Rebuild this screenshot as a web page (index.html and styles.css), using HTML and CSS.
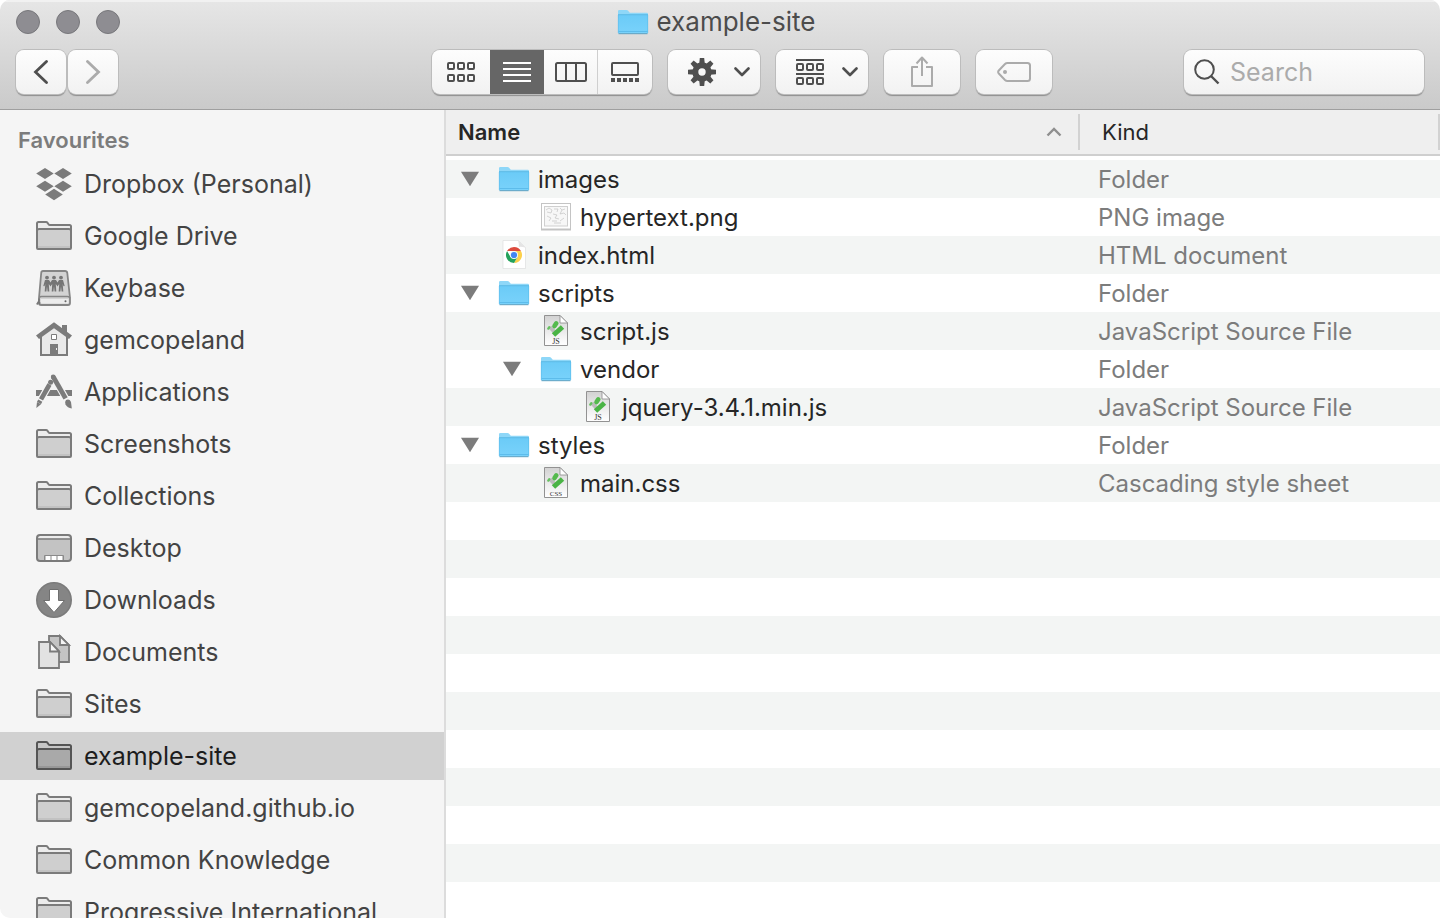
FILE: index.html
```html
<!DOCTYPE html>
<html lang="en-GB">
<head>
<meta charset="utf-8">
<meta name="viewport" content="width=device-width, initial-scale=1">
<title>example-site</title>
<link rel="stylesheet" href="styles.css">
</head>
<body>
<svg class="sprite" aria-hidden="true">
  <defs>
    <linearGradient id="blue" x1="0" y1="0" x2="0" y2="1"><stop offset="0" stop-color="#6bcbf7"/><stop offset="1" stop-color="#79d2fb"/></linearGradient>
    <linearGradient id="paper" x1="0" y1="0" x2="0" y2="1"><stop offset="0" stop-color="#d2d2d2"/><stop offset=".7" stop-color="#f3f3f3"/><stop offset="1" stop-color="#fff"/></linearGradient>
  </defs>
  <symbol id="folder-blue" viewBox="0 0 32 32">
    <path d="M1 5.200Q1 4 2.200 4H9.500Q10.500 4 11.300 5L12.800 6.700H29.800Q31 6.700 31 8V27H1Z" fill="#8ed7f8"/>
    <path d="M1 9H31V26.500Q31 27.500 30 27.500H2Q1 27.500 1 26.500Z" fill="url(#blue)"/>
    <path d="M1 8.700H31" stroke="#5ab9e6"/>
    <path d="M1.500 25.500H30.500" stroke="#5dbceb"/>
    <path d="M1.500 27.700H30.500" stroke="#5a9fc0"/>
    <path d="M1.300 9V27M30.700 9V27" stroke="#5bbbe9" stroke-width=".6"/>
  </symbol>
  <symbol id="folder" viewBox="0 0 36 36">
    <path d="M1 31V5.500Q1 4 2.500 4H10Q11 4 11.700 5L12.500 6.200Q13 7 14 7H33.500Q35 7 35 8.500V31Z" fill="var(--light)"/>
    <path d="M1 11H35V31H1Z" fill="var(--fill)"/>
    <path d="M2 29H34" stroke="var(--shade)" stroke-width="2"/>
    <path d="M1 12.500Q1.500 11 3 11H33Q34.500 11 35 12.500" fill="none" stroke="var(--line)" stroke-width="2"/>
    <path d="M1 30V5.500Q1 4 2.500 4H10Q11 4 11.700 5L12.500 6.200Q13 7 14 7H33.500Q35 7 35 8.500V30Q35 31 34 31H2Q1 31 1 30Z" fill="none" stroke="var(--line)" stroke-width="2"/>
  </symbol>
  <symbol id="dropbox" viewBox="0 0 36 36">
    <path d="M9 2L17.700 7.500 9 13 .2 7.500ZM27 2L35.800 7.500 27 13 18.300 7.500ZM9 14.800L17.700 20.300 9 25.800 .2 20.300ZM27 14.800L35.800 20.300 27 25.800 18.300 20.300ZM18 22.800L26.800 28.500 18 34.300 9.200 28.500Z" fill="#7b7b7b"/>
  </symbol>
  <symbol id="keybase" viewBox="0 0 36 36">
    <path d="M7 1H29Q31 1 31.300 3L34 28V33Q34 35 32 35H5Q3 35 3 33V28L5.200 3Q5.400 1 7 1Z" fill="#d3d3d3" stroke="#858585" stroke-width="1.800"/>
    <path d="M3.500 27.500Q4 26.500 5.500 26.500H31.500Q33.500 26.500 33.800 28" fill="none" stroke="#858585" stroke-width="1.600"/>
    <path d="M4.800 29H32.500V32.500Q32.500 33.600 31.500 33.600H6Q4.800 33.600 4.800 32.500Z" fill="#ececec"/>
    <circle cx="29.500" cy="31.300" r="1" fill="#666"/>
    <path d="M3 28.500V31L.8 34.500M3.500 32V34.500" stroke="#777" stroke-width="1.600" fill="none"/>
    <g fill="#757575">
      <circle cx="11" cy="7.600" r="1.900"/><circle cx="18" cy="7.600" r="1.900"/><circle cx="25" cy="7.600" r="1.900"/>
      <path d="M9 10H13L14.500 12.500 16 10H20L21.500 12.500 23 10H27L28.700 16 27.500 16.300 26.700 14 27.300 21.500H25.600L25 16.500 24.400 21.500H22.700L23.200 14 21.500 16.500 19.800 14 20.300 21.500H18.600L18 16.500 17.400 21.500H15.700L16.200 14 14.500 16.500 12.800 14 13.300 21.500H11.600L11 16.500 10.400 21.500H8.700L9.300 14 8.500 16.300 7.300 16Z"/>
    </g>
  </symbol>
  <symbol id="home" viewBox="0 0 36 36">
    <path d="M5 13L18 4 31 13V33H5Z" fill="#e9e9e9" stroke="#7b7b7b" stroke-width="2"/>
    <path d="M26 3H31V12L26 8Z" fill="#7b7b7b"/>
    <path d="M18 .3L36 13.500 33 17 18 6.200 3 17 0 13.500Z" fill="#7b7b7b"/>
    <path d="M15.500 12.500H20.500V17.500H15.500Z" fill="#fff" stroke="#7b7b7b"/>
    <path d="M14 22H22V33H14Z" fill="#7b7b7b"/><path d="M20.500 26V28" stroke="#eee"/>
  </symbol>
  <symbol id="apps" viewBox="0 0 36 36">
    <path d="M0 16H36V22H0Z" fill="#7b7b7b"/>
    <path d="M15.500 6.500L2.500 30" stroke="#f5f5f5" stroke-width="7"/>
    <path d="M17.500 3L34 32" stroke="#f5f5f5" stroke-width="7"/>
    <path d="M13.500 10.500L5 25.400M4.300 26.700L3 29" stroke="#7b7b7b" stroke-width="4.600"/>
    <circle cx="14.600" cy="8.300" r="2.500" fill="#7b7b7b"/>
    <path d="M1 28L5 30.300 .3 34Z" fill="#7b7b7b"/>
    <path d="M17.300 3L29.600 24.400" stroke="#7b7b7b" stroke-width="4.800"/>
    <circle cx="17.200" cy="3" r="2.400" fill="#7b7b7b"/>
    <path d="M30 26Q33.500 24.500 35 28L35.800 34.500Q31.500 34 29.500 30.500Q28.500 27.500 30 26Z" fill="#7b7b7b"/>
  </symbol>
  <symbol id="desktop" viewBox="0 0 36 36">
    <rect x="1" y="5" width="34" height="26" rx="3" fill="#c3c3c3"/>
    <path d="M2 8Q2 6 4 6H32Q34 6 34 8V8.500H2Z" fill="#ececec"/>
    <path d="M1 9H35" stroke="#7b7b7b" stroke-width="1.600"/>
    <path d="M8.500 25.500H27.500V31H8.500Z" fill="none" stroke="#8a8a8a"/>
    <path d="M10 26H14V30H10ZM16 26H20V30H16ZM22 26H26V30H22Z" fill="#fff"/>
    <rect x="1" y="5" width="34" height="26" rx="3" fill="none" stroke="#7b7b7b" stroke-width="2"/>
  </symbol>
  <symbol id="downloads" viewBox="0 0 36 36">
    <circle cx="18" cy="18" r="17.200" fill="#858585" stroke="#7b7b7b" stroke-width="1.600"/>
    <path d="M13.500 7.500H22.500V18.500H28.500L18 30.500 7.500 18.500H13.500Z" fill="#fff" stroke="#6f6f6f" stroke-linejoin="round"/>
  </symbol>
  <symbol id="documents" viewBox="0 0 36 36">
    <g stroke="#7b7b7b" stroke-width="1.800">
      <path d="M13 2H24L33 11V28H13Z" fill="#c4c4c4"/><path d="M24 2V11H33Z" fill="#f5f5f5"/>
      <path d="M3 8H14L23 17V34H3Z" fill="#e2e2e2"/><path d="M14 8V17.500H23Z" fill="#f8f8f8"/>
    </g>
  </symbol>
  <symbol id="picture" viewBox="0 0 32 32">
    <rect x="1" y="3.500" width="30" height="26" fill="#888" opacity=".5"/>
    <rect x="1.500" y="2.500" width="29" height="25.500" fill="#fff" stroke="#c4c4c4"/>
    <rect x="4.500" y="5.500" width="23" height="19.500" fill="#f7f7f7" stroke="#cfcfcf"/>
    <path d="M6 9L9 7 12 9 11 12 7 11M14 8H18L17 11M20 7L22 9 25 8M22 9L20 13 24 12 26 14M7 15L11 17 9 20M13 13L17 14 15 17 19 18M12 20H17M14 22H21M20 20L24 17" fill="none" stroke="#bbb" stroke-width=".6"/>
  </symbol>
  <symbol id="chrome-doc" viewBox="0 0 32 32">
    <path d="M5 1.500H20.500L27.500 8.500V29.500H5Z" fill="#fff" stroke="#dedede" stroke-width=".7"/>
    <path d="M20 1.500Q21.500 6 20.800 8 24 7.500 27.500 8.800Z" fill="#e4e4e4"/>
    <path d="M9.070 12A8 8 0 0 1 22.930 12H16Z" fill="#dd4b3e"/>
    <path d="M22.930 12A8 8 0 0 1 16 24L19.500 18 16 12Z" fill="#fcd04b"/>
    <path d="M16 24A8 8 0 0 1 9.070 12L12.500 18 19.500 18Z" fill="#24a25b"/>
    <circle cx="16" cy="16" r="4" fill="#f4f6f8"/><circle cx="16" cy="16" r="3.100" fill="#4285f4"/>
  </symbol>
  <symbol id="code-doc" viewBox="0 0 32 32">
    <path d="M4.500 .5H20L27.500 8V30.500H4.500Z" fill="url(#paper)" stroke="#929292"/>
    <path d="M20 .5V8H27.500Z" fill="#fff" stroke="#8c8c8c" stroke-width=".8"/>
    <path d="M10 12L14.500 17" stroke="#bdbdbd" stroke-width="4"/>
    <path d="M13.500 20L22.500 12" stroke="#4ab445" stroke-width="5"/>
    <path d="M14.500 11L16.300 8.300" stroke="#55ba4e" stroke-width="4.600" stroke-linecap="round"/>
    <path d="M8.300 13.600L9.300 12.200" stroke="#66c160" stroke-width="2.400" stroke-linecap="round"/>
  </symbol>
  <symbol id="icons-view" viewBox="0 0 28 20"><g fill="none" stroke="currentColor" stroke-width="2"><rect x="1" y="1" width="6" height="6" rx="1"/><rect x="11" y="1" width="6" height="6" rx="1"/><rect x="21" y="1" width="6" height="6" rx="1"/><rect x="1" y="13" width="6" height="6" rx="1"/><rect x="11" y="13" width="6" height="6" rx="1"/><rect x="21" y="13" width="6" height="6" rx="1"/></g></symbol>
  <symbol id="chevron" viewBox="0 0 16 10"><path d="M1.500 1.500L8 8 14.500 1.500" fill="none" stroke="currentColor" stroke-width="2.600" stroke-linecap="round" stroke-linejoin="round"/></symbol>
</svg>

<div class="window">
  <header class="titlebar">
    <div class="title-row">
      <div class="lights">
        <button class="light" aria-label="Close"></button>
        <button class="light" aria-label="Minimise"></button>
        <button class="light" aria-label="Zoom"></button>
      </div>
      <h1 class="title"><svg class="icon-32" aria-hidden="true"><use href="#folder-blue"/></svg>example-site</h1>
    </div>
    <div class="toolbar">
      <nav class="history" aria-label="History">
        <button class="tool nav-button" aria-label="Back"><svg width="16" height="24" viewBox="0 0 16 24"><path d="M13.500 1.500L2.500 12 13.500 22.500" fill="none" stroke="currentColor" stroke-width="2.800" stroke-linecap="round"/></svg></button>
        <button class="tool nav-button" aria-label="Forward" disabled><svg width="16" height="24" viewBox="0 0 16 24"><path d="M2.500 1.500L13.500 12 2.500 22.500" fill="none" stroke="currentColor" stroke-width="2.800" stroke-linecap="round"/></svg></button>
      </nav>
      <div class="views" role="group" aria-label="View">
        <button class="view" aria-label="Icons"><svg width="28" height="20"><use href="#icons-view"/></svg></button>
        <button class="view selected" aria-label="List" aria-pressed="true"><svg width="28" height="20" viewBox="0 0 28 20"><path d="M0 1H28M0 7H28M0 13H28M0 19H28" stroke="currentColor" stroke-width="2"/></svg></button>
        <button class="view divided" aria-label="Columns"><svg width="32" height="20" viewBox="0 0 32 20"><path d="M11 1V19M21 1V19" stroke="currentColor" stroke-width="2"/><rect x="1" y="1" width="30" height="18" rx="1.500" fill="none" stroke="currentColor" stroke-width="2"/></svg></button>
        <button class="view" aria-label="Gallery"><svg width="28" height="20" viewBox="0 0 28 20"><rect x="1" y="1" width="26" height="12" rx="1" fill="none" stroke="currentColor" stroke-width="2"/><path d="M0 16H4V20H0ZM6 16H10V20H6ZM12 16H16V20H12ZM18 16H22V20H18ZM24 16H28V20H24Z" fill="currentColor"/></svg></button>
      </div>
      <button class="tool menu-button" aria-label="Action"><svg width="28" height="28" viewBox="-14 -14 28 28"><g fill="currentColor"><path id="tooth" d="M-2.800 -8L-2.200 -14H2.200L2.800 -8Z"/><use href="#tooth" transform="rotate(45)"/><use href="#tooth" transform="rotate(90)"/><use href="#tooth" transform="rotate(135)"/><use href="#tooth" transform="rotate(180)"/><use href="#tooth" transform="rotate(225)"/><use href="#tooth" transform="rotate(270)"/><use href="#tooth" transform="rotate(315)"/></g><circle r="6.700" fill="none" stroke="currentColor" stroke-width="6"/></svg><svg width="16" height="10"><use href="#chevron"/></svg></button>
      <button class="tool menu-button" aria-label="Group"><svg width="28" height="26" viewBox="0 0 28 26"><path d="M0 1H28M0 15H28" stroke="currentColor" stroke-width="2"/><g fill="none" stroke="currentColor" stroke-width="2"><rect x="1" y="5" width="6" height="6" rx="1"/><rect x="11" y="5" width="6" height="6" rx="1"/><rect x="21" y="5" width="6" height="6" rx="1"/><rect x="1" y="19" width="6" height="6" rx="1"/><rect x="11" y="19" width="6" height="6" rx="1"/><rect x="21" y="19" width="6" height="6" rx="1"/></g></svg><svg width="16" height="10"><use href="#chevron"/></svg></button>
      <button class="tool wide" aria-label="Share" disabled><svg width="22" height="32" viewBox="0 0 22 32"><path d="M7 11H1V30H21V11H15M11 20V2M5.500 7.500L11 1.500 16.500 7.500" fill="none" stroke="currentColor" stroke-width="2" stroke-linejoin="round"/></svg></button>
      <button class="tool wide" aria-label="Tags" disabled><svg width="34" height="20" viewBox="0 0 34 20"><path d="M10.500 1H30.500Q33 1 33 3.500V16.500Q33 19 30.500 19H10.500Q9 19 8 18L1.800 11.500Q.5 10 1.800 8.500L8 2Q9 1 10.500 1Z" fill="none" stroke="currentColor" stroke-width="2"/><circle cx="8" cy="10" r="2" fill="currentColor"/></svg></button>
      <label class="search">
        <svg width="26" height="26" viewBox="0 0 26 26" aria-hidden="true"><circle cx="10.500" cy="10.500" r="9.300" fill="none" stroke="#4f4f4f" stroke-width="2"/><path d="M17 17L24.500 24.500" stroke="#4f4f4f" stroke-width="2.400"/></svg>
        <input type="search" placeholder="Search" aria-label="Search">
      </label>
    </div>
  </header>

  <div class="content">
    <aside class="sidebar">
      <h2 class="sidebar-heading">Favourites</h2>
      <ul class="places">
        <li><a class="place" href="#"><svg class="icon-36"><use href="#dropbox"/></svg>Dropbox (Personal)</a></li>
        <li><a class="place" href="#"><svg class="icon-36"><use href="#folder"/></svg>Google Drive</a></li>
        <li><a class="place" href="#"><svg class="icon-36"><use href="#keybase"/></svg>Keybase</a></li>
        <li><a class="place" href="#"><svg class="icon-36"><use href="#home"/></svg>gemcopeland</a></li>
        <li><a class="place" href="#"><svg class="icon-36"><use href="#apps"/></svg>Applications</a></li>
        <li><a class="place" href="#"><svg class="icon-36"><use href="#folder"/></svg>Screenshots</a></li>
        <li><a class="place" href="#"><svg class="icon-36"><use href="#folder"/></svg>Collections</a></li>
        <li><a class="place" href="#"><svg class="icon-36"><use href="#desktop"/></svg>Desktop</a></li>
        <li><a class="place" href="#"><svg class="icon-36"><use href="#downloads"/></svg>Downloads</a></li>
        <li><a class="place" href="#"><svg class="icon-36"><use href="#documents"/></svg>Documents</a></li>
        <li><a class="place" href="#"><svg class="icon-36"><use href="#folder"/></svg>Sites</a></li>
        <li><a class="place current" href="#" aria-current="page"><svg class="icon-36"><use href="#folder"/></svg>example-site</a></li>
        <li><a class="place" href="#"><svg class="icon-36"><use href="#folder"/></svg>gemcopeland.github.io</a></li>
        <li><a class="place" href="#"><svg class="icon-36"><use href="#folder"/></svg>Common Knowledge</a></li>
        <li><a class="place" href="#"><svg class="icon-36"><use href="#folder"/></svg>Progressive International</a></li>
      </ul>
    </aside>

    <main class="files">
      <table class="file-table">
        <colgroup><col class="col-name"><col></colgroup>
        <thead>
          <tr>
            <th scope="col" aria-sort="ascending"><div class="head sorted">Name<svg width="16" height="10" viewBox="0 0 16 10" aria-hidden="true"><path d="M1.500 8.500L8 2 14.500 8.500" fill="none" stroke="#8f8f8f" stroke-width="2.400"/></svg></div></th>
            <th scope="col"><div class="head kind-head">Kind</div></th>
          </tr>
        </thead>
        <tbody>
          <tr><td><div class="file"><button class="toggle" aria-label="Collapse images"></button><svg class="icon-32"><use href="#folder-blue"/></svg>images</div></td><td class="kind">Folder</td></tr>
          <tr><td><div class="file leaf level-1"><svg class="icon-32"><use href="#picture"/></svg>hypertext.png</div></td><td class="kind">PNG image</td></tr>
          <tr><td><div class="file leaf"><svg class="icon-32"><use href="#chrome-doc"/></svg>index.html</div></td><td class="kind">HTML document</td></tr>
          <tr><td><div class="file"><button class="toggle" aria-label="Collapse scripts"></button><svg class="icon-32"><use href="#folder-blue"/></svg>scripts</div></td><td class="kind">Folder</td></tr>
          <tr><td><div class="file leaf level-1"><svg class="icon-32" viewBox="0 0 32 32"><use href="#code-doc"/><text class="badge" x="16" y="29">JS</text></svg>script.js</div></td><td class="kind">JavaScript Source File</td></tr>
          <tr><td><div class="file level-1"><button class="toggle" aria-label="Collapse vendor"></button><svg class="icon-32"><use href="#folder-blue"/></svg>vendor</div></td><td class="kind">Folder</td></tr>
          <tr><td><div class="file leaf level-2"><svg class="icon-32" viewBox="0 0 32 32"><use href="#code-doc"/><text class="badge" x="16" y="29">JS</text></svg>jquery-3.4.1.min.js</div></td><td class="kind">JavaScript Source File</td></tr>
          <tr><td><div class="file"><button class="toggle" aria-label="Collapse styles"></button><svg class="icon-32"><use href="#folder-blue"/></svg>styles</div></td><td class="kind">Folder</td></tr>
          <tr><td><div class="file leaf level-1"><svg class="icon-32" viewBox="0 0 32 32"><use href="#code-doc"/><text class="badge long" x="16" y="29">CSS</text></svg>main.css</div></td><td class="kind">Cascading style sheet</td></tr>
        </tbody>
      </table>
    </main>
  </div>
</div>
</body>
</html>
```

FILE: styles.css
```css
* { box-sizing: border-box; }

body {
  margin: 0;
  background: #fff;
  font-family: Inter, "Liberation Sans", sans-serif;
  color: #262626;
}

button { padding: 0; border: 0; font: inherit; }
svg { flex: none; display: block; }
.sprite { position: absolute; width: 0; height: 0; }
.icon-32 { width: 32px; height: 32px; }
.icon-36 { width: 36px; height: 36px; }

.window {
  display: flex;
  flex-direction: column;
  height: 100vh;
  overflow: hidden;
  border-radius: 10px;
}

/* Title bar and toolbar */
.titlebar {
  flex: none;
  padding: 3px 16px 15px;
  border-bottom: 1px solid #9f9f9f;
  background: linear-gradient(#e6e6e6, #cacaca);
  box-shadow: inset 0 2px #f1f1f1;
}

.title-row {
  display: grid;
  grid-template-columns: 1fr auto 1fr;
  align-items: center;
  height: 38px;
}

.lights { display: flex; gap: 16px; }

.light {
  width: 24px;
  height: 24px;
  border: 1px solid #77777b;
  border-radius: 50%;
  background: #8e8d92;
}

.title {
  display: flex;
  align-items: center;
  gap: 8px;
  margin: 0 8px 0 0;
  font-size: 26px;
  font-weight: 400;
  line-height: 36px;
  color: #4c4c4c;
}

.toolbar { display: flex; align-items: center; gap: 16px; margin-top: 9px; }
.history { display: flex; flex: 0 0 400px; gap: 2px; }

.tool, .views, .search {
  flex: none;
  height: 44px;
  border-radius: 8px;
  background: linear-gradient(#fdfdfd, #f2f2f2);
  box-shadow: 0 0 0 1px #bcbcbc, 0 2px 1px #8e8e8e;
  color: #4f4f4f;
}

.tool { display: flex; align-items: center; justify-content: center; }
.tool:disabled { color: #ababab; }
.nav-button { width: 50px; }
.wide { width: 76px; }
.menu-button { width: 92px; padding: 0 10px 0 20px; justify-content: space-between; }

.views { display: flex; overflow: hidden; }

.view {
  display: flex;
  flex: none;
  width: 54px;
  align-items: center;
  justify-content: center;
  background: none;
  color: inherit;
}

.view:first-child { width: 58px; }
.view.selected { background: #666; color: #fff; }
.view.divided { border-right: 1px solid #cfcfcf; }

.search {
  display: flex;
  width: 240px;
  align-items: center;
  gap: 10px;
  margin-left: auto;
  padding: 0 10px;
}

.search input {
  flex: 1;
  width: 100%;
  min-width: 0;
  padding: 0;
  border: 0;
  outline: 0;
  background: none;
  font: inherit;
  font-size: 25px;
}

.search input::placeholder { color: #ababab; opacity: 1; }

/* Gaps between buttons and groups */
.menu-button + .menu-button { margin: 0; }

/* Sidebar */
.content { display: flex; flex: 1; min-height: 0; }

.sidebar {
  flex: 0 0 446px;
  overflow: hidden;
  border-right: 2px solid #dcdcdc;
  background: #f5f5f5;
}

.sidebar-heading {
  margin: 0;
  padding: 10px 18px 0;
  font-size: 22px;
  font-weight: 600;
  line-height: 40px;
  color: #7c7c7c;
}

.places {
  display: flex;
  flex-direction: column;
  gap: 4px;
  margin: 0;
  padding: 0;
  list-style: none;
}

.place {
  --line: #7b7b7b;
  --fill: #cfcfcf;
  --light: #ececec;
  --shade: #c2c2c2;
  display: flex;
  align-items: center;
  gap: 12px;
  height: 48px;
  padding-left: 36px;
  font-size: 25px;
  color: #434343;
  text-decoration: none;
  white-space: nowrap;
}

.place.current {
  --line: #555;
  --fill: #a9a9a9;
  --light: #c6c6c6;
  --shade: #989898;
  background: #d1d1d1;
  color: #1d1d1d;
}

/* File list */
.files {
  flex: 1;
  min-width: 0;
  overflow: hidden;
  background: #fff repeating-linear-gradient(#f3f5f4 0 38px, #fff 38px 76px) 0 50px no-repeat;
}

.file-table { width: 100%; border-collapse: collapse; table-layout: fixed; font-size: 24px; }
.col-name { width: 634px; }
.file-table th, .file-table td { padding: 0; text-align: left; }

.file-table thead tr { background: #efefef; box-shadow: inset 0 -2px #cfcfcf; }
.file-table tbody::before { content: ""; display: block; height: 4px; }
.file-table th { height: 46px; padding-bottom: 2px; font-size: 22px; }

.head {
  display: flex;
  align-items: center;
  justify-content: space-between;
  height: 36px;
  padding: 0 16px 0 12px;
  border-right: 2px solid #d2d2d2;
  font-weight: 400;
}

.head.sorted { font-weight: 600; }
.head.kind-head { padding-left: 22px; }

.file {
  display: flex;
  align-items: center;
  gap: 8px;
  height: 38px;
  padding-left: 14px;
}

.file.leaf { padding-left: 52px; }
.file.level-1 { padding-left: 56px; }
.file.leaf.level-1 { padding-left: 94px; }
.file.leaf.level-2 { padding-left: 136px; }

.toggle {
  width: 20px;
  height: 16px;
  margin-right: 10px;
  background: #7c7c7c;
  clip-path: polygon(5% 5%, 95% 5%, 50% 95%);
}

.file-table .kind { padding-left: 18px; color: #7c7c7c; }

.badge {
  fill: #333;
  font-family: "Liberation Serif", serif;
  font-size: 8px;
  text-anchor: middle;
}

.badge.long { font-size: 7px; }
```
